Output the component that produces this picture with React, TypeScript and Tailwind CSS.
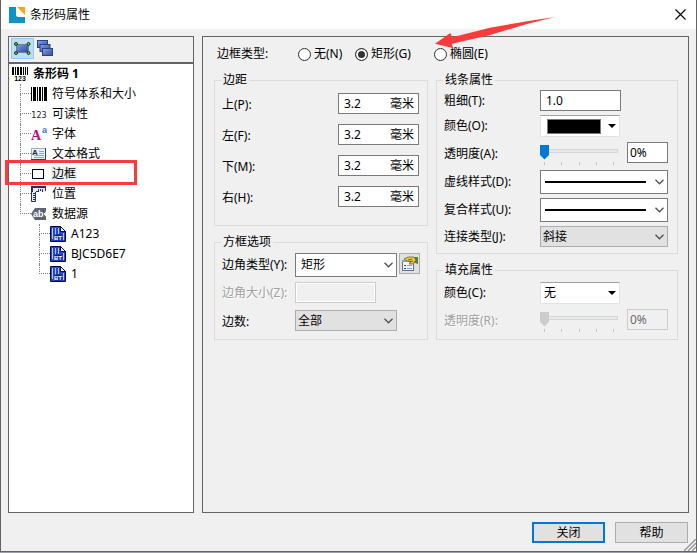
import type { ReactNode } from "react";
import clsx from "clsx";

const MARGINS = [
  { id: "top", label: "上(P):" },
  { id: "left", label: "左(F):" },
  { id: "bottom", label: "下(M):" },
  { id: "right", label: "右(H):" },
];

const TICKS = [0, 25, 50, 75, 100];

/* ---------- icons ---------- */

function LogoIcon() {
  return (
    <svg width="16" height="16" viewBox="0 0 16 16">
      <path d="M0 0h7v7a3 3 0 0 0 3 3h6v6H0z" fill="#0d93c4" />
      <path d="M7 0h9v10h-6a3 3 0 0 1-3-3z" fill="#fff" />
      <path d="M8 0h8v8z" fill="#f7a51d" />
    </svg>
  );
}

function SelectionIcon() {
  return (
    <svg width="17" height="13" viewBox="0 0 17 13">
      <defs>
        <linearGradient id="sel" x1="0" y1="0" x2="1" y2="1">
          <stop offset="0" stopColor="#7f9be0" />
          <stop offset="1" stopColor="#2b4494" />
        </linearGradient>
      </defs>
      <rect x="2.5" y="2.5" width="12" height="8" fill="url(#sel)" stroke="#6b7fae" />
      {[2, 14.5].map((x) =>
        [2, 11].map((y) => (
          <circle key={`${x}-${y}`} cx={x} cy={y} r="1.5" fill="#3ddc3d" stroke="#0a3d14" />
        ))
      )}
    </svg>
  );
}

function StackIcon() {
  return (
    <svg width="17" height="17" viewBox="0 0 17 17">
      <defs>
        <linearGradient id="stk" x1="0" y1="0" x2="1" y2="1">
          <stop offset="0" stopColor="#8aa4e6" />
          <stop offset="1" stopColor="#2f4a9c" />
        </linearGradient>
      </defs>
      {[0, 1, 2].map((i) => (
        <rect
          key={i}
          x={0.5 + i * 2.5}
          y={0.5 + i * 4}
          width="10"
          height="7"
          fill="url(#stk)"
          stroke="#2a4184"
        />
      ))}
    </svg>
  );
}

function BarcodeNumberIcon() {
  return (
    <svg width="16" height="16" viewBox="0 0 16 16">
      <path d="M0 1h2v8H0zM3 1h1v8H3zM5 1h2v8H5zM8 1h2v8H8zM11 1h1v8h-1zM13 1h1v8h-1zM15 1h1v8h-1z" />
      <text x="8" y="15" fontSize="7" fontWeight="bold" textAnchor="middle" fontFamily="Liberation Sans">
        123
      </text>
    </svg>
  );
}

function BarcodeIcon() {
  return (
    <svg width="16" height="16" viewBox="0 0 16 16">
      <path d="M0 1h1v14H0zM2 1h3v14H2zM6 1h1v14H6zM8 1h2v14H8zM11 1h1v14h-1zM13 1h3v14h-3z" />
    </svg>
  );
}

function NumberIcon() {
  return (
    <svg width="16" height="16" viewBox="0 0 16 16">
      <text x="8" y="12" fontSize="8" textAnchor="middle" fontFamily="DejaVu Sans" fill="#222">
        123
      </text>
    </svg>
  );
}

function FontIcon() {
  return (
    <svg width="16" height="16" viewBox="0 0 16 16">
      <text x="0" y="14" fontSize="14" fontWeight="bold" fontFamily="Liberation Serif" fill="#b5127c">
        A
      </text>
      <text x="11" y="7" fontSize="9" fontWeight="bold" fontFamily="Liberation Sans" fill="#3a6fe0">
        a
      </text>
    </svg>
  );
}

function TextFormatIcon() {
  return (
    <svg width="16" height="16" viewBox="0 0 16 16">
      <rect x="0.5" y="2.5" width="14" height="11" fill="#e9f1fb" stroke="#9fb2cc" />
      <path d="M14.5 2v11.5H0" fill="none" stroke="#2b3f66" />
      <text x="1" y="9" fontSize="8" fontWeight="bold" fontFamily="Liberation Sans" fill="#1c2748">
        A
      </text>
      <path d="M8 5.500h5M8 7.500h5M3 9.500h10M3 11.500h10" stroke="#8ea6c8" />
    </svg>
  );
}

function BorderIcon() {
  return (
    <svg width="16" height="16" viewBox="0 0 16 16">
      <rect x="1.500" y="3.500" width="11" height="9" fill="#fff" stroke="#000" />
    </svg>
  );
}

function RulerIcon() {
  return (
    <svg width="16" height="16" viewBox="0 0 16 16">
      <path d="M0 0h15v6H5v10H0z" fill="#e3edf8" />
      <path d="M0 1h15M1 0v6" stroke="#24344f" strokeWidth="2" />
      <path d="M14.500 0v5M11.500 3v3M9.500 3v2M7.500 3v3M5 5.500h2" stroke="#24344f" fill="none" />
      <path d="M0.500 5v10.500h4V6M2 7.500h2M2 9.500h2M2 11.500h2M2 13.500h2" stroke="#24344f" fill="none" />
    </svg>
  );
}

function DataSourceIcon() {
  return (
    <svg width="16" height="16" viewBox="0 0 16 16">
      <path d="M0 8l4-6h11v3l-1 3 1 3v3H4z" fill="#5b6472" />
      <text x="2" y="11" fontSize="9" fontWeight="bold" fontFamily="Liberation Sans" fill="#fff">
        ab
      </text>
      <path d="M15 6l-2 2 2 2" fill="none" stroke="#fff" />
    </svg>
  );
}

function DocumentIcon() {
  return (
    <svg width="16" height="16" viewBox="0 0 16 16">
      <path d="M0.500 0.500h10l5 5v10H0.500z" fill="#2347d8" stroke="#050b45" />
      <path d="M2.500 2v11M5.500 2v7M8.500 2v6M13.500 7v7" stroke="#b9c8ff" />
      <path d="M4.500 8.500h7v6h-7z" fill="#0c1d8c" />
      <path d="M10.500 0.500v5h5z" fill="#fff" stroke="#050b45" />
      <text x="4" y="14" fontSize="6" fontWeight="bold" fontFamily="Liberation Sans" fill="#fff">
        BT
      </text>
    </svg>
  );
}

function PropertiesIcon() {
  return (
    <svg width="17" height="16" viewBox="0 0 17 16">
      <rect x="1.500" y="4.500" width="11" height="10" fill="#f4f7fc" stroke="#5f6f8f" />
      <path d="M1 4h12v2H1z" fill="#7da4dc" />
      <path d="M3 9.500h2M3 12.500h2" stroke="#2c3f78" />
      <path d="M6 9.500h5M6 12.500h5" stroke="#8f9fc0" />
      <path d="M11 1h6v7l-6-2z" fill="#4b8440" />
      <path d="M3 3l4-2h6l2 3-3 4H8l2-2-4-1z" fill="#ecc640" stroke="#7a6a18" strokeWidth="0.800" />
      <path d="M7 4l4-1M8 6l4-1" stroke="#5a4a10" strokeWidth="0.800" />
    </svg>
  );
}

function Chevron() {
  return (
    <svg
      className="pointer-events-none absolute top-1/2 right-1 -translate-y-1/2"
      width="9"
      height="6"
      viewBox="0 0 9 6"
    >
      <path d="M0.500 0.800l4 4 4-4" fill="none" stroke="#505050" strokeWidth="1.300" />
    </svg>
  );
}

/* ---------- tree ---------- */

type TreeItemProps = {
  icon: ReactNode;
  label: string;
  last?: boolean;
  selected?: boolean;
  children?: ReactNode;
};

function TreeItem({ icon, label, last, selected, children }: TreeItemProps) {
  return (
    <li className="relative">
      <div className="flex h-5 items-center">
        <span className="flex w-[11px] shrink-0 flex-col self-stretch">
          <span className="h-1/2 border-b border-l border-dotted border-[#808080]" />
          <span className={clsx("h-1/2", !last && "border-l border-dotted border-[#808080]")} />
        </span>
        {icon}
        <span className={clsx("ml-1 px-px leading-4", selected && "bg-[#f0f0f0]")}>{label}</span>
      </div>
      {selected ? (
        <span className="pointer-events-none absolute -top-1 -left-[15px] z-10 h-[25px] w-[132px] border-3 border-[#fb3b3b]" />
      ) : null}
      {children ? <ul className="ml-[19px]">{children}</ul> : null}
    </li>
  );
}

function ObjectTree() {
  return (
    <ul>
      <li>
        <div className="flex h-5 items-center gap-[5px] pl-[3px]">
          <BarcodeNumberIcon />
          <span className="font-bold">条形码 1</span>
        </div>
        <ul className="ml-[11px]">
          <TreeItem icon={<BarcodeIcon />} label="符号体系和大小" />
          <TreeItem icon={<NumberIcon />} label="可读性" />
          <TreeItem icon={<FontIcon />} label="字体" />
          <TreeItem icon={<TextFormatIcon />} label="文本格式" />
          <TreeItem icon={<BorderIcon />} label="边框" selected />
          <TreeItem icon={<RulerIcon />} label="位置" />
          <TreeItem icon={<DataSourceIcon />} label="数据源" last>
            <TreeItem icon={<DocumentIcon />} label="A123" />
            <TreeItem icon={<DocumentIcon />} label="BJC5D6E7" />
            <TreeItem icon={<DocumentIcon />} label="1" last />
          </TreeItem>
        </ul>
      </li>
    </ul>
  );
}

/* ---------- form parts ---------- */

function Group({ title, className, children }: { title: string; className: string; children: ReactNode }) {
  return (
    <fieldset className={clsx("min-w-0 border border-[#dcdcdc] pl-[7px]", className)}>
      <legend className="-ml-px px-0.5 leading-4">{title}</legend>
      {children}
    </fieldset>
  );
}

type FieldProps = {
  id: string;
  label: string;
  disabled?: boolean;
  labelClass: string;
  className?: string;
  children: ReactNode;
};

function Field({ id, label, disabled, labelClass, className, children }: FieldProps) {
  return (
    <div className={clsx("flex items-center", className)}>
      <label
        htmlFor={id}
        className={clsx(
          "shrink-0 whitespace-nowrap",
          labelClass,
          disabled && "text-[#a0a0a0] [text-shadow:1px_1px_0_white]"
        )}
      >
        {label}
      </label>
      {children}
    </div>
  );
}

type ComboProps = {
  id: string;
  look: "white" | "gray";
  className: string;
  option?: string;
};

// Without an option text the combo shows a sample of the line it stands for.
function Combo({ id, look, className, option }: ComboProps) {
  return (
    <div className={clsx("relative", className)}>
      <select
        id={id}
        className={clsx(
          "h-full w-full appearance-none border outline-none",
          look === "white" ? "border-[#7a7a7a] bg-white pl-[5px]" : "border-[#adadad] bg-[#e1e1e1] pl-0.5"
        )}
      >
        <option>{option}</option>
      </select>
      {option ? null : (
        <span className="pointer-events-none absolute top-1/2 right-[22px] left-[5px] h-0.5 -translate-y-1/2 bg-black" />
      )}
      <Chevron />
    </div>
  );
}

function ColorCombo({ id, option }: { id: string; option?: string }) {
  return (
    <div className="relative h-[22px] w-20">
      <select
        id={id}
        className="h-full w-full appearance-none border border-[#e3e3e3] border-t-[#a0a0a0] bg-white pl-[3px] outline-none"
      >
        <option>{option}</option>
      </select>
      {option ? null : (
        <span className="pointer-events-none absolute top-1 left-[7px] h-[15px] w-[54px] border border-[#7a7a7a] bg-black" />
      )}
      <svg
        className="pointer-events-none absolute top-1/2 right-1 -translate-y-1/2"
        width="8"
        height="4"
        viewBox="0 0 8 4"
      >
        <path d="M0 0h8L4 4z" />
      </svg>
    </div>
  );
}

function OpacitySlider({ id, disabled }: { id: string; disabled?: boolean }) {
  return (
    <div className="flex h-[25px] min-w-0 flex-1 items-start gap-[9px]">
      <div className="flex-1 pt-0.5">
        <input
          id={id}
          type="range"
          defaultValue={0}
          disabled={disabled}
          className={clsx(
            "block h-[15px] w-full appearance-none bg-transparent outline-none",
            "[&::-webkit-slider-runnable-track]:h-1 [&::-webkit-slider-runnable-track]:bg-[#e7eaea] [&::-webkit-slider-runnable-track]:shadow-[inset_0_0_0_1px_#d6d6d6]",
            "[&::-webkit-slider-thumb]:-mt-1 [&::-webkit-slider-thumb]:h-[15px] [&::-webkit-slider-thumb]:w-[9px] [&::-webkit-slider-thumb]:appearance-none [&::-webkit-slider-thumb]:[clip-path:polygon(0_0,100%_0,100%_70%,50%_100%,0_70%)]",
            disabled ? "[&::-webkit-slider-thumb]:bg-[#cccccc]" : "[&::-webkit-slider-thumb]:bg-[#0078d7]"
          )}
        />
        <div className="flex justify-between px-1 pt-1">
          {TICKS.map((tick) => (
            <span key={tick} className="h-[3px] w-px bg-[#c4c4c4]" />
          ))}
        </div>
      </div>
      <input
        type="text"
        aria-label="透明度"
        defaultValue="0%"
        disabled={disabled}
        className={clsx(
          "mt-px h-[21px] w-[41px] border pl-0.5 outline-none",
          disabled ? "border-[#cccccc] bg-[#f0f0f0] text-[#6d6d6d]" : "border-[#7a7a7a] bg-white"
        )}
      />
    </div>
  );
}

type RadioProps = {
  label: string;
  className?: string;
  checked?: boolean;
};

function Radio({ label, className, checked }: RadioProps) {
  return (
    <label className={clsx("flex items-center gap-[3px] whitespace-nowrap", className)}>
      <input
        type="radio"
        name="border-type"
        defaultChecked={checked}
        className="h-[13px] w-[13px] appearance-none rounded-full border border-[#333333] bg-white checked:bg-[#333333] checked:shadow-[inset_0_0_0_2px_white]"
      />
      {label}
    </label>
  );
}

function ArrowMark() {
  return (
    <svg
      className="pointer-events-none absolute -top-7 left-[218px] z-10"
      width="126"
      height="34"
      viewBox="0 0 126 34"
    >
      <path d="M3 27.700L18.300 17l2 4.300L58 11.700 98 4.700 123 1 95 8 58 19 20 27.700l.7 4.300z" fill="#fb3b3b" />
    </svg>
  );
}

/* ---------- dialog ---------- */

export default function App() {
  return (
    <div className="flex min-h-screen flex-col bg-[#9a9fb0] pb-px font-['Noto_Sans','Noto_Sans_CJK_SC',sans-serif] text-xs text-black">
      <div className="relative flex flex-1 flex-col border-x border-b border-[#646464] bg-[#f0f0f0]">
        <header className="flex h-[29px] items-center justify-between bg-white pr-[9px] pl-2">
          <h1 className="flex items-center gap-[5px]">
            <LogoIcon />
            条形码属性
          </h1>
          <button type="button" aria-label="关闭窗口" className="p-px">
            <svg width="11" height="11" viewBox="0 0 11 11">
              <path d="M0.500 0.500l10 10M10.500 0.500l-10 10" stroke="#000" strokeWidth="1.100" />
            </svg>
          </button>
        </header>

        <div className="flex flex-1 gap-2 px-[7px] pt-[7px]">
          <aside className="w-[186px] shrink-0 border border-[#646464] bg-white">
            <div className="flex h-[27px] items-start gap-[3px] border-b-2 border-[#646464] bg-[#f0f0f0] pt-px pl-0.5">
              <button
                type="button"
                aria-label="选择"
                className="flex h-[21px] w-[23px] items-center justify-center border border-[#90c8f6] bg-[#c0dcf3]"
              >
                <SelectionIcon />
              </button>
              <button type="button" aria-label="堆叠" className="flex h-[21px] items-center">
                <StackIcon />
              </button>
            </div>
            <ObjectTree />
          </aside>

          <main className="min-w-0 flex-1 border border-[#646464] pt-[7px] pr-2.5 pl-[11px]">
            <div className="relative flex h-5 items-center pl-[3px]">
              <span className="w-[81px]">边框类型:</span>
              <Radio label="无(N)" className="w-[57px]" />
              <Radio label="矩形(G)" className="w-[79px]" checked />
              <Radio label="椭圆(E)" />
              <ArrowMark />
            </div>

            <div className="mt-2 grid grid-cols-[214fr_242fr] items-start gap-2">
              <div className="flex flex-col gap-2">
                <Group title="边距" className="pt-[5px] pr-2 pb-[18px]">
                  <div className="flex flex-col gap-2.5">
                    {MARGINS.map((margin) => (
                      <Field
                        key={margin.id}
                        id={margin.id}
                        label={margin.label}
                        labelClass="pt-0.5"
                        className="h-[21px] justify-between"
                      >
                        <span className="flex h-[21px] w-[81px] items-center border border-[#7a7a7a] bg-white pr-1 pl-[5px]">
                          <input
                            id={margin.id}
                            type="text"
                            defaultValue="3.2"
                            className="w-full min-w-0 bg-transparent outline-none"
                          />
                          <span className="shrink-0">毫米</span>
                        </span>
                      </Field>
                    ))}
                  </div>
                </Group>

                <Group title="方框选项" className="pt-[3px] pr-[7px] pb-2">
                  <Field id="corner" label="边角类型(Y):" labelClass="w-[73px]">
                    <Combo id="corner" look="white" option="矩形" className="h-6 min-w-0 flex-1" />
                    <button
                      type="button"
                      aria-label="边角设置"
                      className="mb-[3px] ml-0.5 flex h-[21px] w-[21px] items-center justify-center border border-[#adadad] bg-[#e1e1e1]"
                    >
                      <PropertiesIcon />
                    </button>
                  </Field>
                  <Field id="corner-size" label="边角大小(Z):" labelClass="w-[73px]" className="mt-[5px]" disabled>
                    <input
                      id="corner-size"
                      type="text"
                      disabled
                      className="h-[21px] w-[81px] border border-[#cccccc] bg-[#f0f0f0] shadow-[inset_0_0_0_1px_white]"
                    />
                  </Field>
                  <Field id="sides" label="边数:" labelClass="w-[73px] pt-0.5" className="mt-[7px]">
                    <Combo id="sides" look="gray" option="全部" className="mr-[23px] h-[21px] min-w-0 flex-1" />
                  </Field>
                </Group>
              </div>

              <div className="flex flex-col gap-2">
                <Group title="线条属性" className="pt-0.5 pr-[9px] pb-1.5">
                  <div className="flex flex-col gap-1">
                    <Field id="weight" label="粗细(T):" labelClass="w-24">
                      <input
                        id="weight"
                        type="text"
                        defaultValue="1.0"
                        className="h-[21px] w-[81px] border border-[#7a7a7a] bg-white pl-[5px] outline-none"
                      />
                    </Field>
                    <Field id="line-color" label="颜色(O):" labelClass="w-24">
                      <ColorCombo id="line-color" />
                    </Field>
                    <Field id="line-opacity" label="透明度(A):" labelClass="w-24">
                      <OpacitySlider id="line-opacity" />
                    </Field>
                    <Field id="dash" label="虚线样式(D):" labelClass="w-24">
                      <Combo id="dash" look="white" className="h-6 min-w-0 flex-1" />
                    </Field>
                    <Field id="compound" label="复合样式(U):" labelClass="w-24">
                      <Combo id="compound" look="white" className="h-6 min-w-0 flex-1" />
                    </Field>
                    <Field id="join" label="连接类型(J):" labelClass="w-24">
                      <Combo id="join" look="gray" option="斜接" className="h-[21px] min-w-0 flex-1" />
                    </Field>
                  </div>
                </Group>

                <Group title="填充属性" className="pt-1 pr-[9px] pb-1.5">
                  <div className="flex flex-col gap-1">
                    <Field id="fill-color" label="颜色(C):" labelClass="w-24">
                      <ColorCombo id="fill-color" option="无" />
                    </Field>
                    <Field id="fill-opacity" label="透明度(R):" labelClass="w-24" disabled>
                      <OpacitySlider id="fill-opacity" disabled />
                    </Field>
                  </div>
                </Group>
              </div>
            </div>
          </main>
        </div>

        <footer className="flex justify-end gap-2.5 pt-[9px] pr-2 pb-2">
          <button type="button" className="h-[21px] w-[73px] border-2 border-[#0078d7] bg-[#e1e1e1] leading-4">
            关闭
          </button>
          <button type="button" className="h-[21px] w-[73px] border border-[#adadad] bg-[#e1e1e1] leading-4">
            帮助
          </button>
        </footer>

        <svg className="absolute right-0 bottom-0" width="12" height="12" viewBox="0 0 12 12">
          <path d="M0 12L12 0M4 12l8-8M8 12l4-4" stroke="#9a9a9a" strokeWidth="1.500" />
          <path d="M2 12L12 2M6 12l6-6M10 12l2-2" stroke="#fff" />
        </svg>
      </div>
    </div>
  );
}
